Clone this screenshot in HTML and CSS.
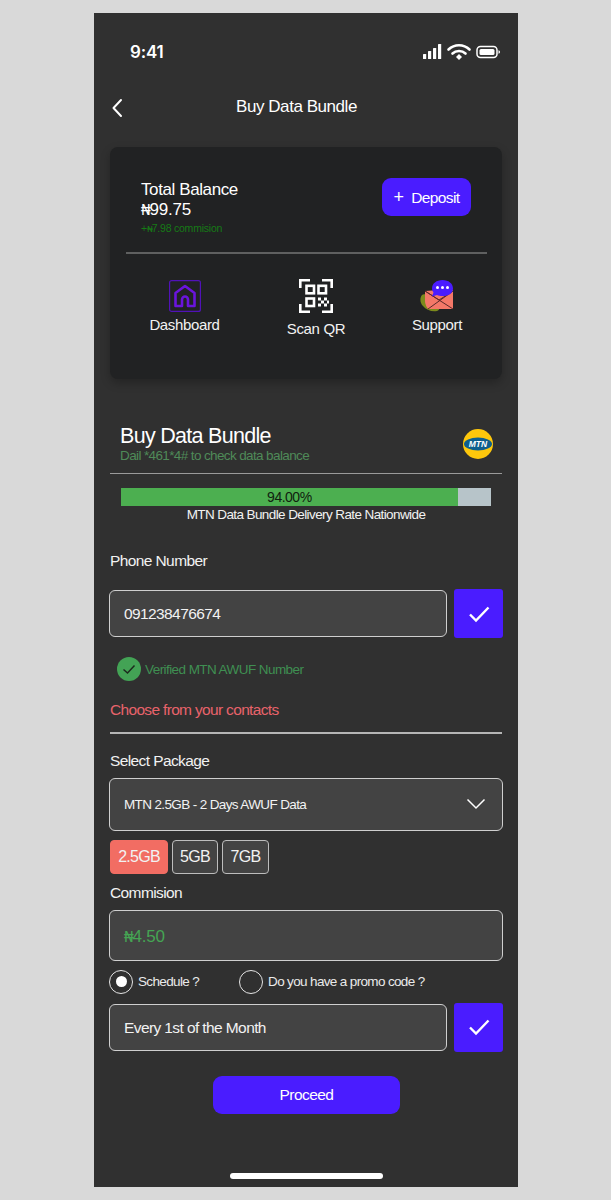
FILE: index.html
```html
<!DOCTYPE html>
<html lang="en">
<head>
<meta charset="utf-8">
<title>Buy Data Bundle</title>
<link rel="stylesheet" href="styles.css">
</head>
<body>
<main class="phone">
  <div class="status">
    <span class="time">9:41</span>
    <svg class="status-icons" width="77" height="18" viewBox="0 0 77 18">
      <g fill="#fff">
        <rect x="0" y="11" width="3.2" height="5" rx=".6"/>
        <rect x="5" y="8" width="3.2" height="8" rx=".6"/>
        <rect x="10" y="5" width="3.2" height="11" rx=".6"/>
        <rect x="15" y="1" width="3.2" height="15" rx=".6"/>
      </g>
      <g fill="none" stroke="#fff" stroke-width="2.6" stroke-linecap="round">
        <path d="M25.500 6.500C31.500 .8 40.500 .8 46.500 6.500"/>
        <path d="M29.500 10.500C33 7.200 39 7.200 42.500 10.500"/>
      </g>
      <path d="M33 14l3-3 3 3-3 3z" fill="#fff"/>
      <rect x="54" y="3.500" width="20" height="11" rx="3.500" fill="none" stroke="#fff" stroke-width="1.500"/>
      <rect x="56.500" y="6" width="15" height="6" rx="1.500" fill="#fff"/>
      <path d="M75.500 7.200c1 .3 1.500 1 1.500 1.800s-.5 1.500-1.500 1.800z" fill="#fff"/>
    </svg>
  </div>

  <header class="topbar">
    <svg class="back" width="12" height="20" viewBox="0 0 12 20"><path d="M10 2L2.500 10l7.500 8" fill="none" stroke="#fff" stroke-width="2" stroke-linecap="round" stroke-linejoin="round"/></svg>
    <h1 class="title">Buy Data Bundle</h1>
  </header>

  <section class="card">
    <div class="balance-row">
      <div class="balance">
        <div class="balance-label">Total Balance</div>
        <div class="balance-value"><span class="naira">₦</span>99.75</div>
        <div class="balance-comm">+<span class="naira">₦</span>7.98 commision</div>
      </div>
      <button class="deposit"><span class="plus">+</span> Deposit</button>
    </div>
    <div class="card-rule"></div>
    <nav class="shortcuts">
      <div class="shortcut">
        <svg width="32" height="32" viewBox="0 0 32 32" class="ic-home">
          <rect x=".6" y=".6" width="30.800" height="30.800" rx="2" fill="none" stroke="#5112b8" stroke-width="1.200"/>
          <path d="M6.500 26V13L16 6l9.500 7v13H19v-6.500a3 3 0 0 0-6 0V26z" fill="none" stroke="#6a14dc" stroke-width="2.600" stroke-linejoin="round"/>
        </svg>
        <span>Dashboard</span>
      </div>
      <div class="shortcut shortcut-qr">
        <svg width="34" height="34" viewBox="0 0 34 34">
          <g fill="none" stroke="#fff" stroke-width="2.600">
            <path d="M1.300 9V1.300H11M23 1.300h9.700V9M1.300 25v7.700H11M23 32.700h9.700V25"/>
            <rect x="7.500" y="6.800" width="7.500" height="7.500"/>
            <rect x="19.500" y="6.800" width="7.500" height="7.500"/>
            <rect x="7.500" y="19.500" width="7.500" height="7.500"/>
          </g>
          <g fill="#fff">
            <rect x="19" y="18.500" width="3" height="3"/><rect x="25" y="18.500" width="3" height="3"/>
            <rect x="22" y="21.500" width="3" height="3"/><rect x="19" y="24.500" width="3" height="3"/>
            <rect x="25" y="24.500" width="3" height="3"/><rect x="28" y="21.500" width="2" height="3"/>
          </g>
        </svg>
        <span>Scan QR</span>
      </div>
      <div class="shortcut shortcut-support">
        <svg width="34" height="32" viewBox="0 0 34 32">
          <path d="M2 15c-2.500 3-2 8 1 11 3 4 9 6 14 5 3-1 3-4 0-4.500-3-.5-6-1-8-3.500-2-2.500-2-5-2-7-1-2-3.500-2.500-5-1z" fill="#7c8a1c"/>
          <path d="M5 11L19 10h14v19H9c-2 0-4-5-4-8z" fill="#f47868"/>
          <path d="M5 11l28 18M33 11L8 29M5 11l14 9 14-9" fill="none" stroke="#5b2a2a" stroke-width="1"/>
          <path d="M12 8.500C12 3.500 16.500 0 22.500 0S33 3.500 33 8.500 28.500 16 22.500 16c-2 0-4-.3-5.500-1l-5 1.500 1.500-4c-1-1.200-1.500-2.500-1.500-4z" fill="#4a1cff"/>
          <g fill="#fff"><circle cx="17.500" cy="7.500" r="1.500"/><circle cx="22.500" cy="7.500" r="1.500"/><circle cx="27.500" cy="7.500" r="1.500"/></g>
        </svg>
        <span>Support</span>
      </div>
    </nav>
  </section>

  <section class="bundle-head">
    <div>
      <h2 class="bundle-title">Buy Data Bundle</h2>
      <p class="bundle-sub">Dail *461*4# to check data balance</p>
    </div>
    <svg class="mtn" width="30" height="30" viewBox="0 0 30 30">
      <circle cx="15" cy="15" r="15" fill="#fdc70c"/>
      <ellipse cx="15" cy="15" rx="14" ry="6.500" fill="#0e5f8e"/>
      <text x="15" y="18" text-anchor="middle" class="mtn-text">MTN</text>
    </svg>
  </section>
  <div class="rule rule-head"></div>

  <div class="progress"><div class="progress-fill" style="width:91%"><span class="progress-text">94.00%</span></div></div>
  <p class="progress-caption">MTN Data Bundle Delivery Rate Nationwide</p>

  <label class="label label-phone">Phone Number</label>
  <div class="input-row">
    <div class="field field-row">091238476674</div>
    <button class="confirm" aria-label="Confirm"><svg width="24" height="20" viewBox="0 0 24 20"><path d="M3 10.500l6 6L21.500 3.500" fill="none" stroke="#fff" stroke-width="2.400"/></svg></button>
  </div>

  <div class="verified">
    <svg width="24" height="24" viewBox="0 0 24 24"><circle cx="12" cy="12" r="12" fill="#43a355"/><path d="M6.500 12.500l4 3.500 7-7.500" fill="none" stroke="#1d2a1e" stroke-width="1.500"/></svg>
    <span>Verified MTN AWUF Number</span>
  </div>
  <a class="contacts">Choose from your contacts</a>
  <div class="rule rule-contacts"></div>

  <label class="label label-package">Select Package</label>
  <div class="field field-select">
    <span>MTN 2.5GB - 2 Days AWUF Data</span>
    <svg width="20" height="12" viewBox="0 0 20 12"><path d="M1.500 1.500L10 10l8.500-8.500" fill="none" stroke="#fff" stroke-width="1.500"/></svg>
  </div>
  <div class="chips">
    <span class="chip chip-on">2.5GB</span>
    <span class="chip">5GB</span>
    <span class="chip">7GB</span>
  </div>

  <label class="label label-comm">Commision</label>
  <div class="field field-comm"><span><span class="naira">₦</span>4.50</span></div>

  <div class="radios">
    <span class="radio radio-on"></span><span class="radio-text radio-text-a">Schedule ?</span>
    <span class="radio"></span><span class="radio-text">Do you have a promo code ?</span>
  </div>

  <div class="input-row input-row-sched">
    <div class="field field-row">Every 1st of the Month</div>
    <button class="confirm" aria-label="Confirm"><svg width="24" height="20" viewBox="0 0 24 20"><path d="M3 10.500l6 6L21.500 3.500" fill="none" stroke="#fff" stroke-width="2.400"/></svg></button>
  </div>

  <button class="proceed">Proceed</button>
  <div class="home-bar"></div>
</main>
</body>
</html>
```

FILE: styles.css
```css
* { box-sizing: border-box; margin: 0; padding: 0; }
html, body { height: 100%; }
body {
  background: #d9d9d9;
  padding: 13px 0 0 94px;
  font-family: "Liberation Sans", Arial, sans-serif;
  color: #fff;
  overflow: hidden;
}
button { font-family: inherit; border: 0; color: #fff; }
.naira { font-family: "Liberation Mono", monospace; font-size: .95em; letter-spacing: -1.2px; }

.phone {
  width: 424px;
  height: 1174px;
  background: #303030;
  padding: 0 15px;
  display: flex;
  flex-direction: column;
  align-items: flex-start;
}

.status {
  width: 100%;
  height: 22px;
  margin-top: 28px;
  padding: 0 0 0 21px;
  display: flex;
  align-items: center;
  justify-content: space-between;
}
.time { font-family: Inter, sans-serif; font-weight: 600; font-size: 17px; letter-spacing: -.2px; }
.status-icons { margin-right: 3px; }

.topbar {
  width: 100%;
  height: 24px;
  margin-top: 32px;
  display: flex;
  align-items: center;
  position: relative;
  justify-content: center;
}
.back { position: absolute; left: 2px; top: 3px; }
.title { font-size: 17px; font-weight: 400; letter-spacing: -.45px; margin-left: -19px; }

.card {
  width: 392px;
  height: 232px;
  margin: 28px 0 0 1px;
  background: #212223;
  border-radius: 8px;
  box-shadow: 0 4px 10px rgba(0,0,0,.25);
  padding-top: 31px;
}
.balance-row { display: flex; justify-content: space-between; padding: 0 31px; height: 74px; }
.balance-label { font-size: 17px; line-height: 21px; letter-spacing: -.4px; margin-top: 1px; }
.balance-value { font-size: 17px; line-height: 20px; letter-spacing: -.2px; }
.balance-comm { font-size: 10.500px; line-height: 14px; color: #167a16; letter-spacing: -.22px; }
.deposit {
  width: 89px;
  height: 38px;
  background: #4a1cff;
  border-radius: 9px;
  font-size: 15.500px;
  letter-spacing: -.6px;
}
.plus { font-size: 18px; margin-right: 4px; }
.card-rule { height: 2px; background: #5f6060; margin-left: 16px; width: 361px; }

.shortcuts {
  display: grid;
  grid-template-columns: 149px 114px 128px;
  padding-top: 26px;
}
.shortcut {
  display: flex;
  flex-direction: column;
  align-items: center;
  font-size: 15px;
  letter-spacing: -.35px;
  color: #f2f2f2;
  gap: 4px;
}
.shortcut svg { display: block; }
.shortcut-qr { gap: 7px; margin-top: -1px; }
.shortcut-support { gap: 4px; }

.bundle-head {
  width: 393px;
  margin-top: 45px;
  padding: 0 9px 0 11px;
  display: flex;
  justify-content: space-between;
  align-items: center;
  height: 40px;
}
.bundle-title { font-size: 21.500px; line-height: 24px; font-weight: 400; letter-spacing: -.7px; }
.bundle-sub { font-size: 13.500px; line-height: 16px; color: #4f8a58; letter-spacing: -.62px; }
.mtn-text { font: italic 700 8.500px "Liberation Sans", sans-serif; fill: #fff; }

.rule { height: 1px; background: #9a9a9a; margin-left: 1px; width: 392px; }
.rule-head { margin-top: 9px; }

.progress {
  width: 370px;
  height: 18px;
  margin: 14px 0 0 12px;
  background: #b7c4c9;
}
.progress-fill {
  height: 100%;
  background: #4caf50;
  display: flex;
  justify-content: center;
  align-items: center;
}
.progress-text { color: #10210f; font-size: 14px; letter-spacing: -.5px; }
.progress-caption {
  width: 394px;
  text-align: center;
  font-size: 13.500px;
  line-height: 18px;
  letter-spacing: -.6px;
  color: #f2f2f2;
}

.label { font-size: 15.500px; letter-spacing: -.6px; line-height: 18px; color: #f2f2f2; margin-left: 1px; }
.label-phone { margin-top: 28px; }
.label-package { margin-top: 18px; }
.label-comm { margin-top: 10px; }

.field {
  background: #434343;
  border: 1.500px solid #cfcfcf;
  border-radius: 6px;
  padding-left: 14px;
  display: flex;
  align-items: center;
  color: #f2f2f2;
}
.input-row {
  width: 394px;
  display: flex;
  justify-content: space-between;
  align-items: center;
  height: 49px;
  margin-top: 19px;
}
.field-row { width: 338px; height: 47px; font-size: 15.500px; letter-spacing: -.6px; }
.confirm {
  width: 49px;
  height: 49px;
  background: #4a1cff;
  border-radius: 3px;
  display: flex;
  align-items: center;
  justify-content: center;
}

.verified {
  display: flex;
  align-items: center;
  gap: 4px;
  margin: 19px 0 0 8px;
  font-size: 13.500px;
  letter-spacing: -.57px;
  color: #3f8f52;
}
.contacts { margin: 20px 0 0 1px; font-size: 15.500px; line-height: 18px; letter-spacing: -.67px; color: #e8636b; }
.rule-contacts { margin-top: 13px; height: 1.500px; background: #b5b5b5; }

.field-select {
  width: 394px;
  height: 53px;
  margin-top: 8px;
  font-size: 13.500px;
  letter-spacing: -.63px;
  justify-content: space-between;
  padding-right: 16px;
}

.chips { display: grid; grid-template-columns: 58px 46px 47px; gap: 4px; margin: 9px 0 0 1px; }
.chip {
  height: 34px;
  display: flex;
  align-items: center;
  justify-content: center;
  background: #434343;
  border: 1.500px solid #bdbdbd;
  border-radius: 4px;
  font-size: 16px;
  letter-spacing: -.75px;
  color: #f2f2f2;
}
.chip-on { background: #f26d63; border-color: #f26d63; }

.field-comm {
  width: 394px;
  height: 51px;
  margin-top: 8px;
  padding-top: 3px;
  font-size: 17px;
  letter-spacing: -.2px;
  color: #45a553;
}

.radios { display: flex; align-items: center; height: 24px; margin-top: 9px; }
.radio {
  width: 24px;
  height: 24px;
  border: 1.500px solid #e5e5e5;
  border-radius: 50%;
  display: flex;
  align-items: center;
  justify-content: center;
}
.radio-on::after { content: ""; width: 11px; height: 11px; border-radius: 50%; background: #fff; }
.radio-text { font-size: 13.500px; letter-spacing: -.65px; color: #eaeaea; margin-left: 5px; }
.radio-text-a { margin-right: 40px; }

.input-row-sched { margin-top: 9px; }
.input-row-sched .field-row { padding-top: 1px; }

.proceed {
  width: 187px;
  height: 38px;
  margin: 24px 0 0 104px;
  background: #4a1cff;
  border-radius: 9px;
  font-size: 15.500px;
  letter-spacing: -.55px;
}
.home-bar {
  width: 153px;
  height: 6px;
  background: #fff;
  border-radius: 3px;
  margin: 59px 0 0 121px;
}
```
